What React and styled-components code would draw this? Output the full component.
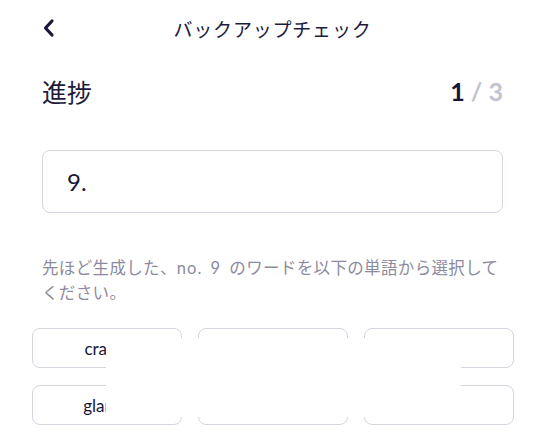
import React from 'react';
import styled, { createGlobalStyle } from 'styled-components';

const GlobalStyle = createGlobalStyle`
  html, body {
    margin: 0;
    padding: 0;
    background: #ffffff;
  }
  body {
    font-family: Lato, "Noto Sans CJK JP", sans-serif;
    color: #16163a;
  }
`;

const Page = styled.div`
  width: 541px;
  height: 445px;
  overflow: hidden;
  background: #fff;
`;

const Header = styled.div`
  display: grid;
  grid-template-columns: 40px 1fr 40px;
  align-items: center;
  height: 56px;
  padding: 0 38px 0 42px;
`;

const BackButton = styled.button`
  display: flex;
  align-items: center;
  padding: 0;
  border: none;
  background: none;
  cursor: pointer;
  color: #16163a;
`;

const Title = styled.h1`
  margin: 0;
  text-align: center;
  font-family: "Noto Sans CJK JP", sans-serif;
  font-size: 19px;
  font-weight: 400;
  letter-spacing: 0.8px;
  color: #1c1b3c;
`;

const Content = styled.div`
  padding: 0 38px 0 42px;
`;

const ProgressRow = styled.div`
  display: flex;
  align-items: center;
  justify-content: space-between;
  height: 36px;
  margin-top: 17px;
`;

const ProgressLabel = styled.span`
  font-family: "Noto Sans CJK JP", sans-serif;
  font-size: 25px;
  color: #1c1b3c;
`;

const Counter = styled.span`
  font-family: Lato, sans-serif;
  font-size: 25px;
  font-weight: 700;
  color: ${(props) => (props.muted ? '#c3c3cf' : '#16163a')};
`;

const WordInput = styled.div`
  display: flex;
  align-items: center;
  height: 61px;
  margin-top: 41px;
  padding: 0 24px;
  border: 1px solid #d6d5df;
  border-radius: 8px;
  font-family: Lato, sans-serif;
  font-size: 24px;
  color: #16163a;
`;

const Hint = styled.p`
  margin: 43px 0 0;
  font-family: Lato, "Noto Sans CJK JP", sans-serif;
  font-size: 16.5px;
  line-height: 25px;
  letter-spacing: 0.35px;
  color: #8c8b9e;
`;

const Latin = styled.span`
  letter-spacing: 1px;
  word-spacing: 3px;
`;

const WordGrid = styled.div`
  position: relative;
  display: grid;
  grid-template-columns: repeat(3, 150px);
  column-gap: 16px;
  row-gap: 17px;
  margin: 22px -11px 0 -10px;
`;

const WordButton = styled.button`
  height: 40px;
  padding: 0;
  border: 1px solid #d6d5df;
  border-radius: 8px;
  background: #fff;
  font-family: Lato, sans-serif;
  font-size: 17px;
  color: #16163a;
  cursor: pointer;
`;

const Cover = styled.div`
  position: absolute;
  left: 74px;
  top: 10px;
  width: 355px;
  height: 79px;
  background: #fff;
`;

const words = ['cradle', 'mask', 'fish', 'glance', 'iron', 'tool'];

const ChevronLeft = () => (
  <svg width="14" height="20" viewBox="0 0 14 20" fill="none">
    <path d="M10 3 L3.5 10 L10 17" stroke="currentColor" strokeWidth="3.2" strokeLinecap="round" strokeLinejoin="round" />
  </svg>
);

const App = () => {
  return (
    <Page>
      <GlobalStyle />
      <Header>
        <BackButton>
          <ChevronLeft />
        </BackButton>
        <Title>バックアップチェック</Title>
        <span />
      </Header>

      <Content>
        <ProgressRow>
          <ProgressLabel>進捗</ProgressLabel>
          <span>
            <Counter>1</Counter>
            <Counter muted> / 3</Counter>
          </span>
        </ProgressRow>

        <WordInput>9.</WordInput>

        <Hint>
          先ほど生成した、<Latin>no. 9 </Latin>のワードを以下の単語から選択して
          <br />
          ください。
        </Hint>

        <WordGrid>
          {words.map((w) => (
            <WordButton key={w}>{w}</WordButton>
          ))}
          <Cover />
        </WordGrid>
      </Content>
    </Page>
  );
};

export default App;
